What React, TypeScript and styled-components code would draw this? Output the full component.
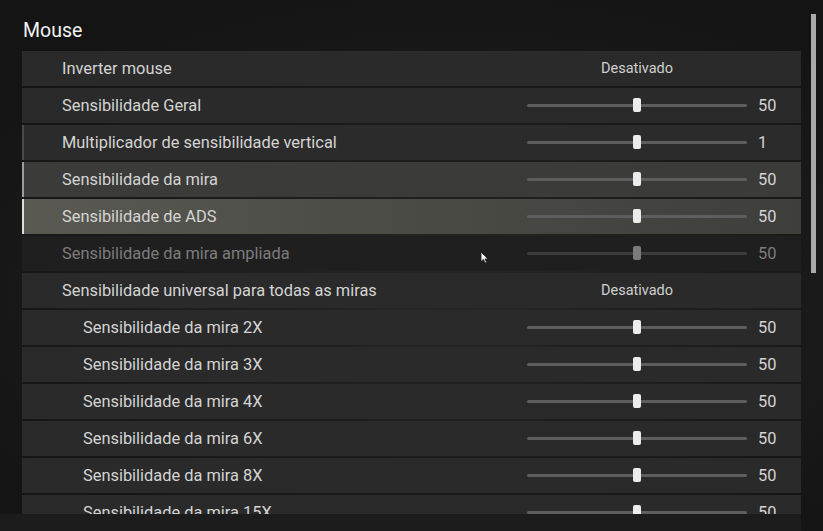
import React from "react";
import styled, { createGlobalStyle } from "styled-components";

const GlobalStyle = createGlobalStyle`
  html, body {
    margin: 0;
    padding: 0;
    background: #151515;
  }
  body {
    font-family: Roboto, "Noto Sans", "Liberation Sans", sans-serif;
  }
`;

type RowKind = "normal" | "hover" | "focus" | "active" | "disabled";

type Setting = {
  label: string;
  value?: number;
  toggle?: string;
  sub?: boolean;
  kind?: RowKind;
};

const settings: Setting[] = [
  { label: "Inverter mouse", toggle: "Desativado" },
  { label: "Sensibilidade Geral", value: 50 },
  { label: "Multiplicador de sensibilidade vertical", value: 1, kind: "hover" },
  { label: "Sensibilidade da mira", value: 50, kind: "focus" },
  { label: "Sensibilidade de ADS", value: 50, kind: "active" },
  { label: "Sensibilidade da mira ampliada", value: 50, kind: "disabled" },
  { label: "Sensibilidade universal para todas as miras", toggle: "Desativado" },
  { label: "Sensibilidade da mira 2X", value: 50, sub: true },
  { label: "Sensibilidade da mira 3X", value: 50, sub: true },
  { label: "Sensibilidade da mira 4X", value: 50, sub: true },
  { label: "Sensibilidade da mira 6X", value: 50, sub: true },
  { label: "Sensibilidade da mira 8X", value: 50, sub: true },
  { label: "Sensibilidade da mira 15X", value: 50, sub: true },
];

const Screen = styled.div`
  position: relative;
  width: 823px;
  height: 531px;
  overflow: hidden;
  display: grid;
  grid-template-columns: 801px 22px;
  background:
    radial-gradient(ellipse 70% 60% at 55% 55%, #262626 0%, #1a1a1a 60%, #141414 100%);
`;

const Main = styled.div`
  display: flex;
  flex-direction: column;
  height: 531px;
`;

const Title = styled.h1`
  margin: 0;
  height: 51px;
  box-sizing: border-box;
  padding: 19px 0 0 23px;
  font-size: 19.5px;
  font-weight: 400;
  line-height: 24px;
  color: #f2f2f2;
`;

const List = styled.div`
  margin-left: 22px;
  height: 463px;
  overflow: hidden;
  display: flex;
  flex-direction: column;
  gap: 2px;
`;

const Footer = styled.div`
  flex: 1;
  background: #1c1c1c;
`;

const rowBg: Record<RowKind, string> = {
  normal: "#2a2a2a",
  hover: "#2b2b2b",
  focus: "#3b3b39",
  active: "linear-gradient(90deg, #5a5a53 0%, #4d4d48 40%, #3e3e3b 100%)",
  disabled: "#1f1f1f",
};

const rowEdge: Record<RowKind, string> = {
  normal: "#2a2a2a",
  hover: "#4a4a4a",
  focus: "#9c9c9a",
  active: "#dcdcd8",
  disabled: "#1f1f1f",
};

const Row = styled.div<{ $kind: RowKind; $sub?: boolean }>`
  flex: 0 0 35px;
  display: grid;
  grid-template-columns: 1fr 220px 54px;
  align-items: center;
  background: ${(p) => rowBg[p.$kind]};
  border-left: 2px solid ${(p) => rowEdge[p.$kind]};
  color: ${(p) => (p.$kind === "disabled" ? "#7c7c7c" : "#d4d4d4")};
  font-size: 16.4px;
`;

const Label = styled.span<{ $sub?: boolean }>`
  padding-left: ${(p) => (p.$sub ? "59px" : "38px")};
  white-space: nowrap;
`;

const Toggle = styled.span`
  text-align: center;
  font-size: 14.5px;
  color: #cfcfcf;
`;

const Track = styled.div<{ $dim?: boolean }>`
  position: relative;
  height: 3px;
  border-radius: 2px;
  background: ${(p) => (p.$dim ? "#3c3c3c" : "#5e5e5e")};
`;

const Thumb = styled.div<{ $dim?: boolean }>`
  position: absolute;
  top: -6px;
  width: 8px;
  height: 14px;
  margin-left: -4px;
  border-radius: 2px;
  background: ${(p) => (p.$dim ? "#7b7b7b" : "#ececec")};
`;

const Value = styled.span`
  padding-left: 11px;
`;

const ScrollTrack = styled.div`
  padding: 14px 0 20px 10px;
  display: flex;
  flex-direction: column;
`;

const ScrollThumb = styled.div`
  width: 5px;
  height: 259px;
  background: #a9a9a9;
`;

const Cursor = styled.svg`
  position: absolute;
  left: 480px;
  top: 251px;
`;

const Slider = ({ value, max, dim }: { value: number; max: number; dim?: boolean }) => (
  <Track $dim={dim}>
    <Thumb $dim={dim} style={{ left: `${(value / max) * 100}%` }} />
  </Track>
);

export default function App() {
  return (
    <>
      <GlobalStyle />
      <Screen>
        <Main>
          <Title>Mouse</Title>
          <List>
            {settings.map((s) => {
              const kind = s.kind ?? "normal";
              return (
                <Row key={s.label} $kind={kind}>
                  <Label $sub={s.sub}>{s.label}</Label>
                  {s.toggle ? (
                    <>
                      <Toggle>{s.toggle}</Toggle>
                      <span />
                    </>
                  ) : (
                    <>
                      <Slider
                        value={s.label.startsWith("Multiplicador") ? 1 : 50}
                        max={s.label.startsWith("Multiplicador") ? 2 : 100}
                        dim={kind === "disabled"}
                      />
                      <Value>{s.value}</Value>
                    </>
                  )}
                </Row>
              );
            })}
          </List>
          <Footer />
        </Main>
        <ScrollTrack>
          <ScrollThumb />
        </ScrollTrack>
        <Cursor width="9" height="13" viewBox="0 0 9 13">
          <path d="M1 1 L1 10.5 L3.4 8.4 L5.1 12 L6.6 11.3 L5 7.9 L8 7.9 Z" fill="#f4f4f4" stroke="#222" strokeWidth="0.8" />
        </Cursor>
      </Screen>
    </>
  );
}
